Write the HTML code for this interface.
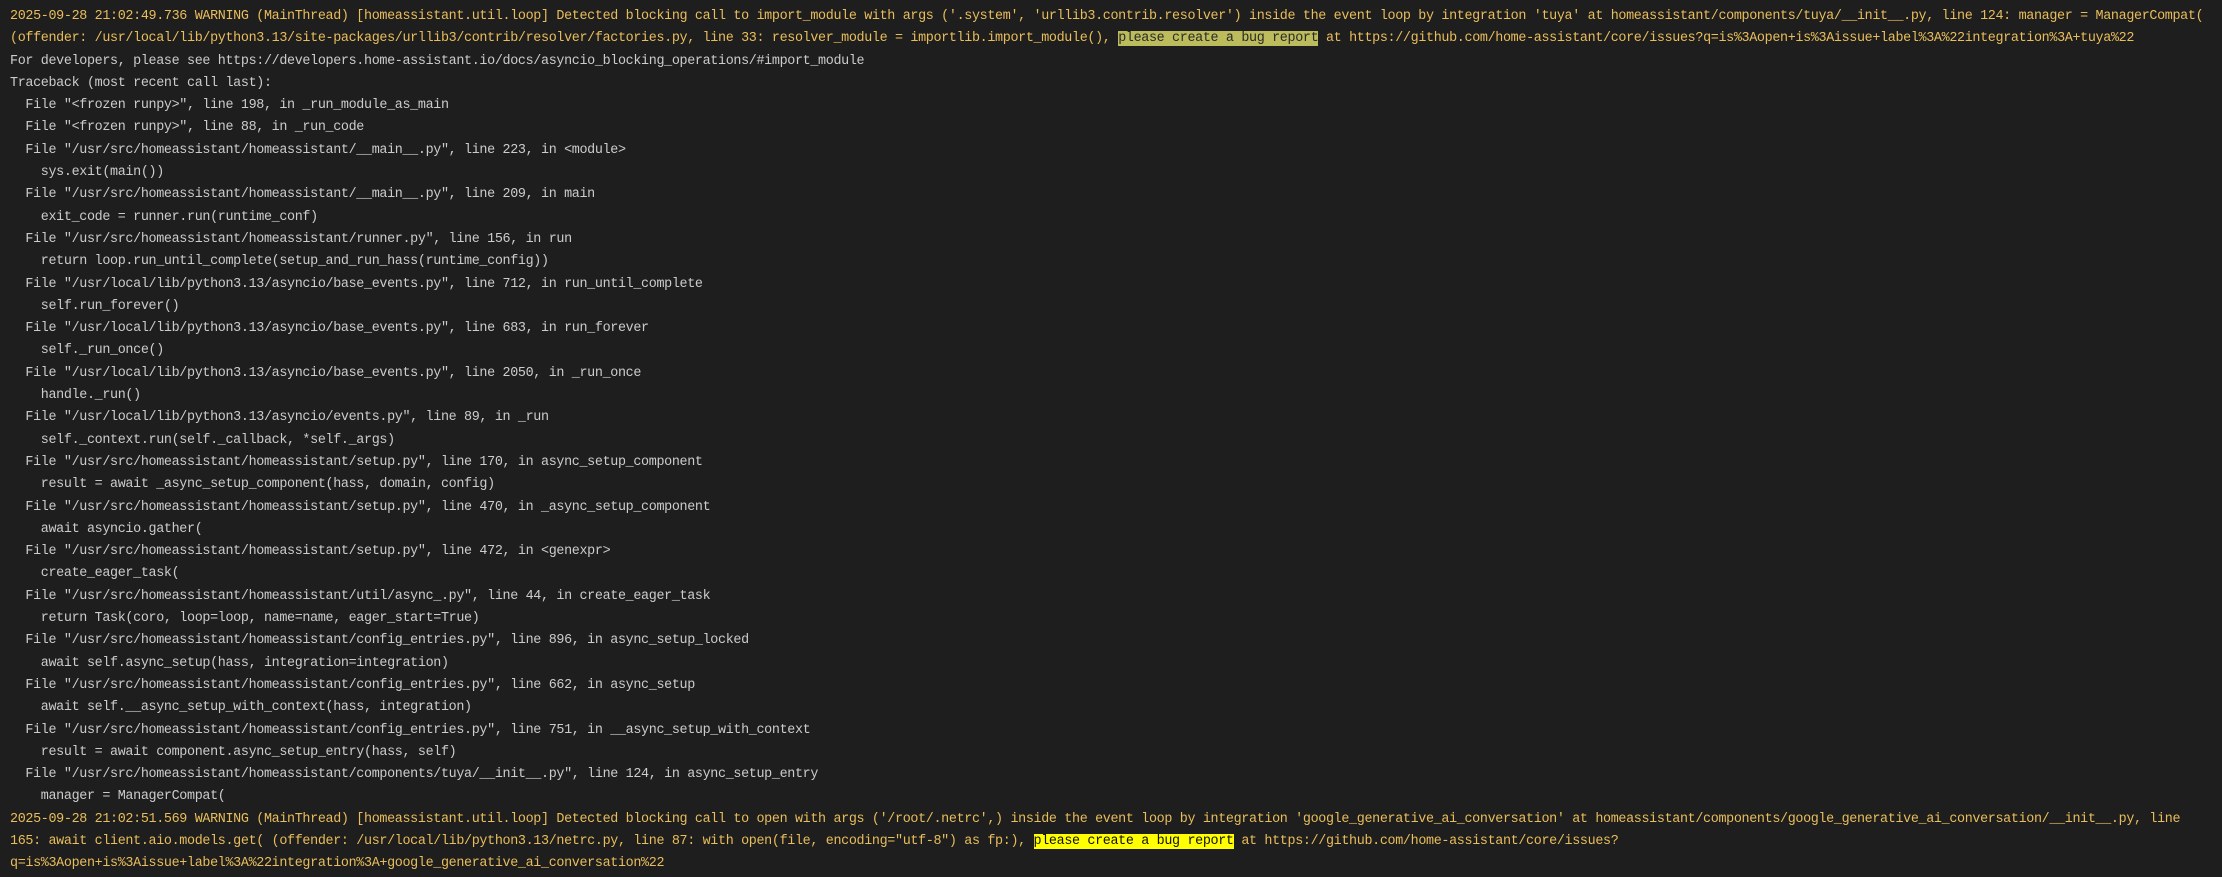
<!DOCTYPE html>
<html><head><meta charset="utf-8"><style>
html,body{margin:0;padding:0;background:#1e1e1e;width:2222px;height:877px;overflow:hidden}
pre{margin:0;padding:6px 0 0 10px;font-family:"Liberation Mono",monospace;font-size:13.4px;letter-spacing:-0.34px;line-height:22.3px;color:#cccccc;white-space:pre}
.w{color:#e9bd5b}
.h1{background:#bcbc5c;color:#2a2a2a}
.h2{background:#ffff00;color:#111}
</style></head><body><pre><span class="w">2025-09-28 21:02:49.736 WARNING (MainThread) [homeassistant.util.loop] Detected blocking call to import_module with args ('.system', 'urllib3.contrib.resolver') inside the event loop by integration 'tuya' at homeassistant/components/tuya/__init__.py, line 124: manager = ManagerCompat(
(offender: /usr/local/lib/python3.13/site-packages/urllib3/contrib/resolver/factories.py, line 33: resolver_module = importlib.import_module(), <span class="h1">please create a bug report</span> at https://github.com/home-assistant/core/issues?q=is%3Aopen+is%3Aissue+label%3A%22integration%3A+tuya%22</span>
For developers, please see https://developers.home-assistant.io/docs/asyncio_blocking_operations/#import_module
Traceback (most recent call last):
  File "&lt;frozen runpy&gt;", line 198, in _run_module_as_main
  File "&lt;frozen runpy&gt;", line 88, in _run_code
  File "/usr/src/homeassistant/homeassistant/__main__.py", line 223, in &lt;module&gt;
    sys.exit(main())
  File "/usr/src/homeassistant/homeassistant/__main__.py", line 209, in main
    exit_code = runner.run(runtime_conf)
  File "/usr/src/homeassistant/homeassistant/runner.py", line 156, in run
    return loop.run_until_complete(setup_and_run_hass(runtime_config))
  File "/usr/local/lib/python3.13/asyncio/base_events.py", line 712, in run_until_complete
    self.run_forever()
  File "/usr/local/lib/python3.13/asyncio/base_events.py", line 683, in run_forever
    self._run_once()
  File "/usr/local/lib/python3.13/asyncio/base_events.py", line 2050, in _run_once
    handle._run()
  File "/usr/local/lib/python3.13/asyncio/events.py", line 89, in _run
    self._context.run(self._callback, *self._args)
  File "/usr/src/homeassistant/homeassistant/setup.py", line 170, in async_setup_component
    result = await _async_setup_component(hass, domain, config)
  File "/usr/src/homeassistant/homeassistant/setup.py", line 470, in _async_setup_component
    await asyncio.gather(
  File "/usr/src/homeassistant/homeassistant/setup.py", line 472, in &lt;genexpr&gt;
    create_eager_task(
  File "/usr/src/homeassistant/homeassistant/util/async_.py", line 44, in create_eager_task
    return Task(coro, loop=loop, name=name, eager_start=True)
  File "/usr/src/homeassistant/homeassistant/config_entries.py", line 896, in async_setup_locked
    await self.async_setup(hass, integration=integration)
  File "/usr/src/homeassistant/homeassistant/config_entries.py", line 662, in async_setup
    await self.__async_setup_with_context(hass, integration)
  File "/usr/src/homeassistant/homeassistant/config_entries.py", line 751, in __async_setup_with_context
    result = await component.async_setup_entry(hass, self)
  File "/usr/src/homeassistant/homeassistant/components/tuya/__init__.py", line 124, in async_setup_entry
    manager = ManagerCompat(
<span class="w">2025-09-28 21:02:51.569 WARNING (MainThread) [homeassistant.util.loop] Detected blocking call to open with args ('/root/.netrc',) inside the event loop by integration 'google_generative_ai_conversation' at homeassistant/components/google_generative_ai_conversation/__init__.py, line
165: await client.aio.models.get( (offender: /usr/local/lib/python3.13/netrc.py, line 87: with open(file, encoding="utf-8") as fp:), <span class="h2">please create a bug report</span> at https://github.com/home-assistant/core/issues?
q=is%3Aopen+is%3Aissue+label%3A%22integration%3A+google_generative_ai_conversation%22</span></pre></body></html>
